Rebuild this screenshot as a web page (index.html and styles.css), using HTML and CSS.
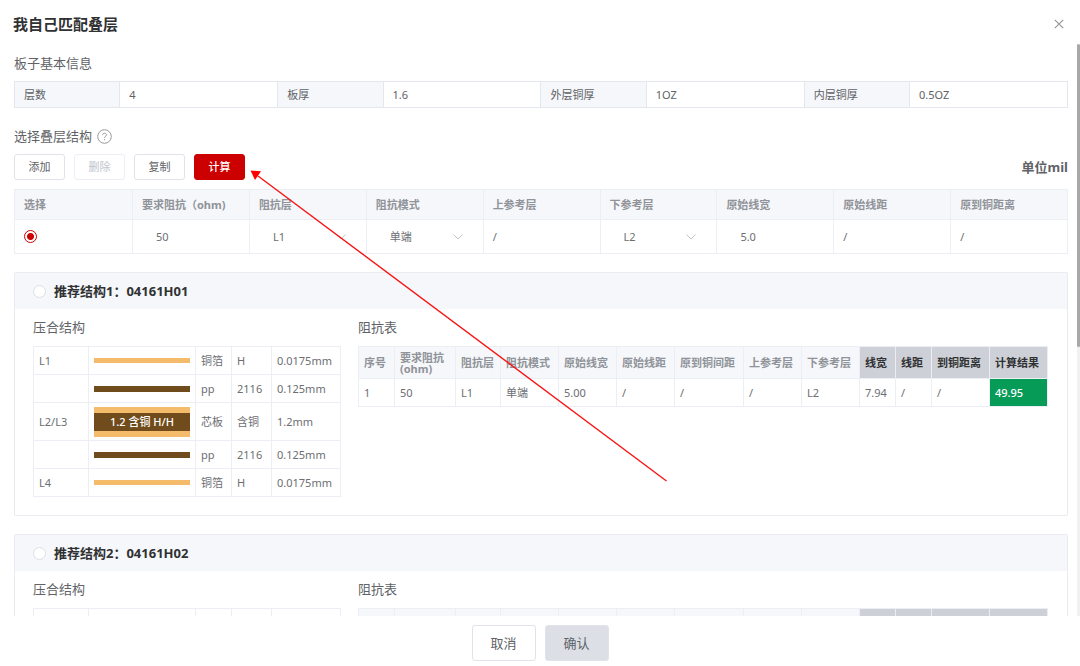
FILE: index.html
```html
<!DOCTYPE html>
<html lang="zh-CN">
<head>
<meta charset="utf-8">
<meta name="viewport" content="width=device-width, initial-scale=1">
<title>我自己匹配叠层</title>
<link rel="stylesheet" href="styles.css">
</head>
<body>
<div class="dialog">
  <header class="dialog-header">
    <h1 class="dialog-title">我自己匹配叠层</h1>
    <button class="icon-button" type="button" aria-label="关闭">
      <svg width="10" height="10" viewBox="0 0 10 10"><path d="M.8.8l8.4 8.4M9.2.8L.8 9.2" fill="none" stroke="#909399" stroke-width="1.1"/></svg>
    </button>
  </header>

  <div class="dialog-main">
    <main class="dialog-body">
      <h2 class="section-title">板子基本信息</h2>
      <table class="info-table">
        <tbody>
          <tr>
            <th scope="row">层数</th><td>4</td>
            <th scope="row">板厚</th><td>1.6</td>
            <th scope="row">外层铜厚</th><td>1OZ</td>
            <th scope="row">内层铜厚</th><td>0.5OZ</td>
          </tr>
        </tbody>
      </table>

      <div class="section-head">
        <h2 class="section-title">选择叠层结构</h2>
        <button class="icon-button" type="button" aria-label="帮助">
          <svg width="15" height="15" viewBox="0 0 15 15" fill="none" stroke="#999"><circle cx="7.5" cy="7.5" r="6.8"/><path d="M5.6 6.1c0-1.2.8-1.9 1.9-1.9s1.9.7 1.9 1.7c0 1.4-1.8 1.5-1.8 3M7.6 10.1v1.2"/></svg>
        </button>
      </div>
      <div class="toolbar">
        <button class="btn" type="button">添加</button>
        <button class="btn" type="button" disabled>删除</button>
        <button class="btn" type="button">复制</button>
        <button class="btn btn-primary" type="button">计算</button>
        <strong class="unit">单位mil</strong>
      </div>

      <table class="layer-table">
        <thead>
          <tr>
            <th scope="col" class="w-pick">选择</th><th scope="col">要求阻抗（ohm)</th><th scope="col">阻抗层</th>
            <th scope="col">阻抗模式</th><th scope="col">上参考层</th><th scope="col">下参考层</th>
            <th scope="col">原始线宽</th><th scope="col">原始线距</th><th scope="col">原到铜距离</th>
          </tr>
        </thead>
        <tbody>
          <tr>
            <td><input class="radio" type="radio" name="row" aria-label="选择" checked></td>
            <td><input class="cell-input" type="text" value="50" aria-label="要求阻抗"></td>
            <td><span class="select-box"><select class="cell-select" aria-label="阻抗层"><option>L1</option></select><svg class="chevron" width="10" height="6" viewBox="0 0 10 6"><path d="M.5.5L5 5 9.5.5" fill="none" stroke="#c0c4cc"/></svg></span></td>
            <td><span class="select-box"><select class="cell-select" aria-label="阻抗模式"><option>单端</option></select><svg class="chevron" width="10" height="6" viewBox="0 0 10 6"><path d="M.5.5L5 5 9.5.5" fill="none" stroke="#c0c4cc"/></svg></span></td>
            <td>/</td>
            <td><span class="select-box"><select class="cell-select" aria-label="下参考层"><option>L2</option></select><svg class="chevron" width="10" height="6" viewBox="0 0 10 6"><path d="M.5.5L5 5 9.5.5" fill="none" stroke="#c0c4cc"/></svg></span></td>
            <td><input class="cell-input" type="text" value="5.0" aria-label="原始线宽"></td>
            <td>/</td>
            <td>/</td>
          </tr>
        </tbody>
      </table>

      <section class="card">
        <label class="card-header"><input class="radio" type="radio" name="plan">推荐结构1：04161H01</label>
        <div class="card-body">
          <div class="panel">
            <h3 class="section-title">压合结构</h3>
            <table class="stack-table">
              <colgroup><col class="w-layer"><col class="w-bar"><col class="w-kind"><col class="w-spec"><col class="w-thick"></colgroup>
              <tbody>
                <tr><td>L1</td><td><div class="bar bar-copper"></div></td><td>铜箔</td><td>H</td><td>0.0175mm</td></tr>
                <tr><td></td><td><div class="bar bar-pp"></div></td><td>pp</td><td>2116</td><td>0.125mm</td></tr>
                <tr class="core-row"><td>L2/L3</td><td><div class="bar-core">1.2 含铜 H/H</div></td><td>芯板</td><td>含铜</td><td>1.2mm</td></tr>
                <tr><td></td><td><div class="bar bar-pp"></div></td><td>pp</td><td>2116</td><td>0.125mm</td></tr>
                <tr><td>L4</td><td><div class="bar bar-copper"></div></td><td>铜箔</td><td>H</td><td>0.0175mm</td></tr>
              </tbody>
            </table>
          </div>
          <div class="panel">
            <h3 class="section-title">阻抗表</h3>
            <table class="imp-table">
              <colgroup><col class="w-narrow"><col class="w-ohm"><col class="w-short"><col span="3" class="w-base"><col class="w-long"><col span="2" class="w-base"><col span="2" class="w-narrow"><col span="2" class="w-base"></colgroup>
              <thead>
                <tr><th scope="col">序号</th><th scope="col">要求阻抗(ohm)</th><th scope="col">阻抗层</th><th scope="col">阻抗模式</th><th scope="col">原始线宽</th><th scope="col">原始线距</th><th scope="col">原到铜间距</th><th scope="col">上参考层</th><th scope="col">下参考层</th><th scope="col" class="result-head">线宽</th><th scope="col" class="result-head">线距</th><th scope="col" class="result-head">到铜距离</th><th scope="col" class="result-head">计算结果</th></tr>
              </thead>
              <tbody>
                <tr><td>1</td><td>50</td><td>L1</td><td>单端</td><td>5.00</td><td>/</td><td>/</td><td>/</td><td>L2</td><td>7.94</td><td>/</td><td>/</td><td class="result-ok">49.95</td></tr>
              </tbody>
            </table>
          </div>
        </div>
      </section>

      <section class="card">
        <label class="card-header"><input class="radio" type="radio" name="plan">推荐结构2：04161H02</label>
        <div class="card-body">
          <div class="panel">
            <h3 class="section-title">压合结构</h3>
            <table class="stack-table">
              <colgroup><col class="w-layer"><col class="w-bar"><col class="w-kind"><col class="w-spec"><col class="w-thick"></colgroup>
              <tbody>
                <tr><td></td><td></td><td></td><td></td><td></td></tr>
              </tbody>
            </table>
          </div>
          <div class="panel">
            <h3 class="section-title">阻抗表</h3>
            <table class="imp-table">
              <colgroup><col class="w-narrow"><col class="w-ohm"><col class="w-short"><col span="3" class="w-base"><col class="w-long"><col span="2" class="w-base"><col span="2" class="w-narrow"><col span="2" class="w-base"></colgroup>
              <thead>
                <tr><th></th><th></th><th></th><th></th><th></th><th></th><th></th><th></th><th></th><th class="result-head"></th><th class="result-head"></th><th class="result-head"></th><th class="result-head"></th></tr>
              </thead>
            </table>
          </div>
        </div>
      </section>
    </main>
    <div class="scroll-track"><div class="scroll-thumb"></div></div>
  </div>

  <footer class="dialog-footer">
    <button class="btn btn-large" type="button">取消</button>
    <button class="btn btn-large btn-muted" type="button">确认</button>
  </footer>

  <svg class="pointer" width="420" height="316" viewBox="0 0 420 316" aria-hidden="true">
    <path d="M416.5 311L8 6" stroke="#f91414" stroke-width="1.4" fill="none"/>
    <path d="M.5.5L11 1.3 5 10z" fill="#f00"/>
  </svg>
</div>
</body>
</html>
```

FILE: styles.css
```css
* {
  box-sizing: border-box;
}

body {
  margin: 0;
  background: #fff;
  color: #606266;
  font-family: "Noto Sans", "Noto Sans CJK SC", sans-serif;
  font-size: 11px;
  line-height: 16px;
}

button,
input,
select {
  margin: 0;
  color: inherit;
  font: inherit;
}

.dialog {
  position: relative;
  display: flex;
  flex-direction: column;
  height: 100vh;
  overflow: hidden;
}

.dialog-header {
  display: flex;
  flex: none;
  align-items: center;
  justify-content: space-between;
  padding: 12px 16px 8px 13px;
}

.dialog-title {
  margin: 0;
  color: #303133;
  font-size: 15px;
  font-weight: 700;
  line-height: 24px;
}

.icon-button {
  display: flex;
  padding: 0;
  border: 0;
  background: none;
}

.dialog-main {
  display: flex;
  flex: 1;
  min-height: 0;
}

.dialog-body {
  flex: 1;
  min-width: 0;
  padding: 9px 9px 0 14px;
  overflow: hidden;
}

.scroll-track {
  flex: none;
  width: 3px;
  background: #f1f1f1;
}

.scroll-thumb {
  height: 53%;
  border-radius: 2px;
  background: #a8a8a8;
}

.section-title {
  margin: 0;
  font-size: 13px;
  font-weight: 400;
  line-height: 20px;
}

.section-head {
  display: flex;
  gap: 5px;
  align-items: center;
  margin-top: 18px;
}

table {
  width: 100%;
  border-collapse: collapse;
  table-layout: fixed;
}

th,
td {
  border: 1px solid #ebeef5;
  text-align: left;
}

th {
  background: #f5f7fa;
}

.info-table {
  margin-top: 8px;
}

.info-table th,
.info-table td {
  height: 26px;
  padding: 0 9px;
  border-color: #e4e7ed;
}

.info-table th {
  width: 10%;
  font-weight: 400;
}

.info-table td {
  width: 15%;
}

.toolbar {
  display: flex;
  gap: 9px;
  align-items: center;
  margin-top: 8px;
}

.btn {
  width: 51px;
  height: 26px;
  padding: 0;
  border: 1px solid #e0e3e9;
  border-radius: 3px;
  background: #fff;
}

.btn:disabled {
  border-color: #ebeef5;
  color: #c0c4cc;
}

.btn-primary {
  border-color: #c00;
  background: #c00;
  color: #fff;
  font-weight: 500;
}

.unit {
  margin-left: auto;
  font-size: 13px;
}

.layer-table {
  margin-top: 9px;
}

.layer-table th,
.layer-table td {
  padding: 0 9px;
}

.layer-table th {
  height: 30px;
  color: #909399;
}

.layer-table td {
  height: 34px;
}

.layer-table .w-pick {
  width: 118px;
}

.layer-table td,
.stack-table td,
.imp-table td {
  color: #6c6e72;
}

.radio {
  display: block;
  width: 13px;
  height: 13px;
  border: 1px solid #dcdfe6;
  border-radius: 50%;
  background: #fff;
  appearance: none;
}

.radio:checked {
  border-color: #c00;
  background: radial-gradient(circle, #c00 3px, #fff 4px);
}

.cell-input,
.cell-select {
  display: block;
  width: 100%;
  height: 24px;
  padding: 0 14px;
  border: 0;
  background: none;
  appearance: none;
}

.select-box {
  display: grid;
  align-items: center;
}

.select-box > * {
  grid-area: 1 / 1;
}

.chevron {
  justify-self: end;
  margin-right: 11px;
  pointer-events: none;
}

.card {
  margin-top: 18px;
  border: 1px solid #e9ebf1;
  border-radius: 2px;
}

.card-header {
  display: flex;
  gap: 8px;
  align-items: center;
  height: 36px;
  padding: 0 18px;
  background: #f5f7fa;
  color: #303133;
  font-size: 13px;
  font-weight: 700;
}

.card-body {
  display: grid;
  grid-template-columns: 307px minmax(0, 1fr);
  gap: 18px;
  padding: 8px 19px 18px 18px;
}

.stack-table,
.imp-table {
  margin-top: 9px;
}

.stack-table td {
  height: 28px;
  padding: 0 5px;
}

.stack-table .core-row td {
  height: 38px;
}

.w-layer {
  width: 55px;
}

.w-bar {
  width: 107px;
}

.w-kind {
  width: 36px;
}

.w-spec {
  width: 40px;
}

.w-thick {
  width: 69px;
}

.bar {
  height: 5px;
}

.bar-copper {
  background: #f4bb6a;
}

.bar-pp {
  height: 6px;
  background: #704c1c;
}

.bar-core {
  height: 30px;
  border: solid #f4bb6a;
  border-width: 6px 0;
  background: #704c1c;
  color: #fff;
  font-weight: 500;
  line-height: 18px;
  text-align: center;
}

.imp-table th,
.imp-table td {
  height: 28px;
  padding: 0 5px;
}

.imp-table th {
  height: 32px;
  color: #909399;
  line-height: 11px;
}

.imp-table .result-head {
  background: #cdd0d6;
  color: #303133;
}

.imp-table .result-ok {
  background: #079b58;
  color: #fff;
  font-weight: 500;
}

.w-narrow {
  width: 36px;
}

.w-ohm {
  width: 61px;
}

.w-short {
  width: 45px;
}

.w-base {
  width: 58px;
}

.w-long {
  width: 69px;
}

.dialog-footer {
  display: flex;
  flex: none;
  gap: 9px;
  justify-content: center;
  padding: 9px 0 5px;
}

.btn-large {
  width: 64px;
  height: 36px;
  font-size: 13px;
}

.btn-muted {
  background: #dcdfe6;
}

/* Callout arrow that runs across the tables to the calculate button */
.pointer {
  position: absolute;
  top: 170px;
  left: 250px;
  pointer-events: none;
}
```
